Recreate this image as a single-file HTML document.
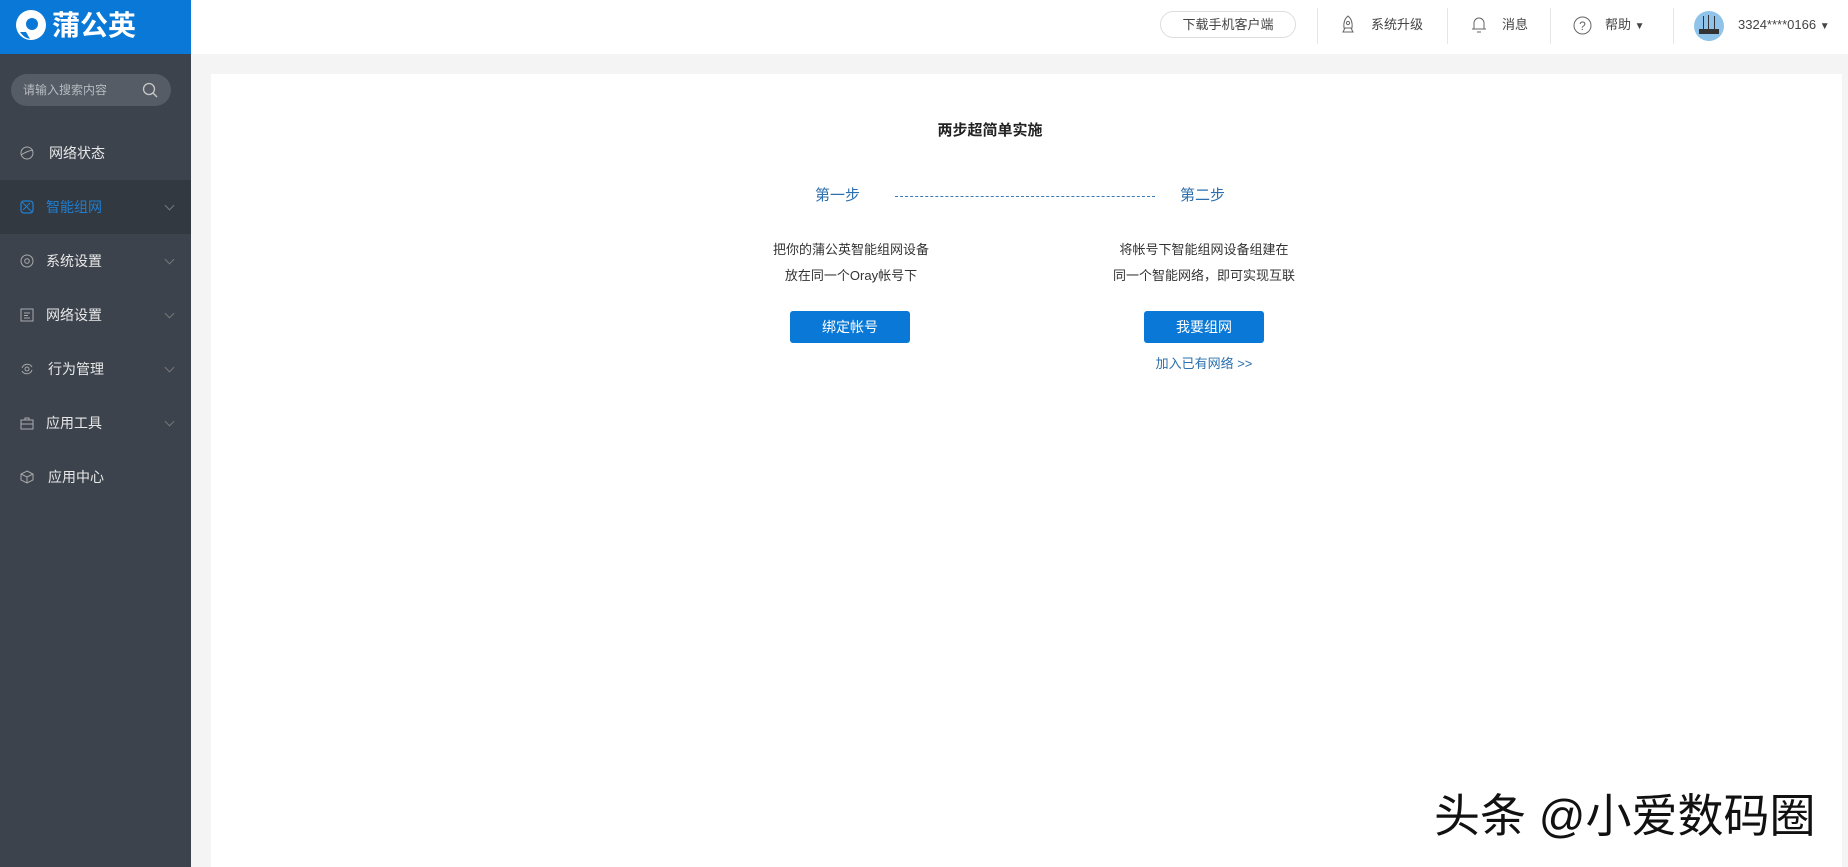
<!DOCTYPE html>
<html><head><meta charset="utf-8"><style>
*{margin:0;padding:0;box-sizing:border-box}
body{width:1848px;height:867px;overflow:hidden;background:#f4f4f5;font-family:"Liberation Sans","Noto Sans CJK SC",sans-serif;position:relative;color:#333}
.abs{position:absolute}
#logo{left:0;top:0;width:191px;height:54px;background:#0a78d6}
#side{left:0;top:54px;width:191px;height:813px;background:#3c434d}
#top{left:191px;top:0;width:1657px;height:54px;background:#fff}
.mi{position:absolute;left:0;width:191px;height:54px;color:#e8e8e8;font-size:14px;line-height:54px}
.mi .t{position:absolute;left:46px}
.mi .ic{position:absolute;left:20px;top:20px;width:14px;height:14px}
.mi .ar{position:absolute;left:166px;top:22px;width:7px;height:7px;border-right:1px solid #777;border-bottom:1px solid #777;transform:rotate(45deg)}
.hd{position:absolute;top:0;height:54px;line-height:50px;font-size:13px;color:#444}
.div{position:absolute;top:8px;width:1px;height:36px;background:#e6e6e6}
.btn{position:absolute;top:311px;width:120px;height:32px;background:#0a78d6;border-radius:3px;color:#fff;font-size:14px;text-align:center;line-height:32px}
.txt{position:absolute;font-size:13px;color:#333;text-align:center;line-height:26px}
</style></head><body>
<div id="logo" class="abs">
 <svg class="abs" style="left:16px;top:10px" width="30" height="30" viewBox="0 0 30 30"><circle cx="15" cy="15" r="15" fill="#fff"/><circle cx="16" cy="14" r="6" fill="#0a78d6"/><path d="M4 22 Q8 28 14 29 L10 22Z" fill="#0a78d6"/></svg>
 <div class="abs" style="left:52px;top:8px;color:#fff;font-size:28px;font-weight:bold;line-height:36px">蒲公英</div>
</div>
<div id="side" class="abs">
 <div class="abs" style="left:11px;top:20px;width:160px;height:32px;border-radius:16px;background:#555c65;color:#b7bbc0;font-size:12px;line-height:32px;padding-left:12px">请输入搜索内容
  <svg class="abs" style="left:131px;top:8px" width="16" height="16" viewBox="0 0 16 16"><circle cx="7" cy="7" r="5.5" fill="none" stroke="#c8c8c8" stroke-width="1.3"/><path d="M11 11l4 4" stroke="#c8c8c8" stroke-width="1.3"/></svg></div>
 <div class="mi" style="top:72px"><svg class="ic" viewBox="0 0 14 14"><circle cx="7" cy="7" r="6" fill="none" stroke="#aaa"/><path d="M1 9 Q7 5 13 4" stroke="#aaa" fill="none"/></svg><span class="t" style="left:49px">网络状态</span></div>
 <div class="mi" style="top:126px;background:#333941;color:#1f7ed0"><svg class="ic" viewBox="0 0 14 14"><rect x="1" y="1" width="12" height="12" rx="3" fill="none" stroke="#1f7ed0" stroke-width="1.3"/><path d="M2 2l10 10M3 10l7-7" stroke="#1f7ed0"/></svg><span class="t">智能组网</span><span class="ar"></span></div>
 <div class="mi" style="top:180px"><svg class="ic" viewBox="0 0 14 14"><circle cx="7" cy="7" r="6" fill="none" stroke="#aaa"/><circle cx="7" cy="7" r="2.3" fill="none" stroke="#aaa"/></svg><span class="t">系统设置</span><span class="ar"></span></div>
 <div class="mi" style="top:234px"><svg class="ic" viewBox="0 0 14 14"><rect x="1" y="1" width="12" height="12" fill="none" stroke="#aaa"/><path d="M4 5h6M4 7.5h4M4 10h6" stroke="#aaa"/></svg><span class="t">网络设置</span><span class="ar"></span></div>
 <div class="mi" style="top:288px"><svg class="ic" viewBox="0 0 14 14"><path d="M2 6 A5.5 5.5 0 0 1 12 5 M12 8 A5.5 5.5 0 0 1 2 9" fill="none" stroke="#aaa"/><circle cx="7" cy="7" r="2" fill="none" stroke="#aaa"/></svg><span class="t" style="left:48px">行为管理</span><span class="ar"></span></div>
 <div class="mi" style="top:342px"><svg class="ic" viewBox="0 0 14 14"><rect x="1" y="4" width="12" height="9" fill="none" stroke="#aaa"/><path d="M5 4V2h4v2M1 8h12" stroke="#aaa" fill="none"/></svg><span class="t">应用工具</span><span class="ar"></span></div>
 <div class="mi" style="top:396px"><svg class="ic" viewBox="0 0 14 14"><path d="M7 1l6 3v6l-6 3-6-3V4zM1 4l6 3 6-3M7 7v6" fill="none" stroke="#aaa"/></svg><span class="t" style="left:48px">应用中心</span></div>
</div>
<div id="top" class="abs"></div>
<div class="abs" style="left:1160px;top:11px;width:136px;height:27px;border:1px solid #ddd;border-radius:14px;font-size:13px;color:#444;text-align:center;line-height:25px">下载手机客户端</div>
<div class="div" style="left:1317px"></div>
<div class="div" style="left:1447px"></div>
<div class="div" style="left:1550px"></div>
<div class="div" style="left:1673px"></div>
<svg class="abs" style="left:1340px;top:15px" width="16" height="20" viewBox="0 0 16 20"><path d="M8 1 Q13 5 12 13 H4 Q3 5 8 1Z M5 13l-2 4h10l-2-4" fill="none" stroke="#666"/><circle cx="8" cy="8" r="1.6" fill="none" stroke="#666"/></svg>
<div class="hd" style="left:1371px">系统升级</div>
<svg class="abs" style="left:1471px;top:15px" width="16" height="20" viewBox="0 0 16 20"><path d="M3 14 V8 a5 5 0 0 1 10 0 V14 H1 H15 M6 17h4" fill="none" stroke="#666"/></svg>
<div class="hd" style="left:1502px">消息</div>
<svg class="abs" style="left:1573px;top:16px" width="19" height="19" viewBox="0 0 19 19"><circle cx="9.5" cy="9.5" r="8.5" fill="none" stroke="#666"/><text x="9.5" y="14" font-size="12" text-anchor="middle" fill="#666" font-family="Liberation Sans">?</text></svg>
<div class="hd" style="left:1605px">帮助 <span style="font-size:10px">▼</span></div>
<div class="abs" style="left:1694px;top:11px;width:30px;height:30px;border-radius:50%;background:#8fc3ea;overflow:hidden"><div class="abs" style="left:5px;top:18px;width:20px;height:5px;background:#333"></div><div class="abs" style="left:9px;top:5px;width:1px;height:13px;background:#333"></div><div class="abs" style="left:14px;top:4px;width:1px;height:14px;background:#333"></div><div class="abs" style="left:20px;top:5px;width:1px;height:13px;background:#333"></div></div>
<div class="hd" style="left:1738px">3324****0166 <span style="font-size:10px">▼</span></div>

<div class="abs" style="left:211px;top:74px;width:1631px;height:793px;background:#fff"></div>
<div class="abs" style="left:790px;top:120px;width:400px;text-align:center;font-size:15px;font-weight:bold;color:#222;line-height:22px">两步超简单实施</div>
<div class="abs" style="left:815px;top:185px;font-size:15px;color:#2b6fae;line-height:22px">第一步</div>
<div class="abs" style="left:895px;top:196px;width:260px;border-top:1px dashed #3a7ab5"></div>
<div class="abs" style="left:1180px;top:185px;font-size:15px;color:#2b6fae;line-height:22px">第二步</div>
<div class="txt" style="left:736px;top:237px;width:230px">把你的蒲公英智能组网设备<br>放在同一个Oray帐号下</div>
<div class="txt" style="left:1084px;top:237px;width:240px">将帐号下智能组网设备组建在<br>同一个智能网络，即可实现互联</div>
<div class="btn" style="left:790px">绑定帐号</div>
<div class="btn" style="left:1144px">我要组网</div>
<div class="abs" style="left:1104px;top:354px;width:200px;text-align:center;font-size:13px;color:#2b6fae;line-height:20px">加入已有网络 &gt;&gt;</div>
<div class="abs" style="left:1434px;top:790px;font-size:46px;color:#111;line-height:52px;white-space:nowrap;letter-spacing:0px">头条 @小爱数码圈</div>
</body></html>
